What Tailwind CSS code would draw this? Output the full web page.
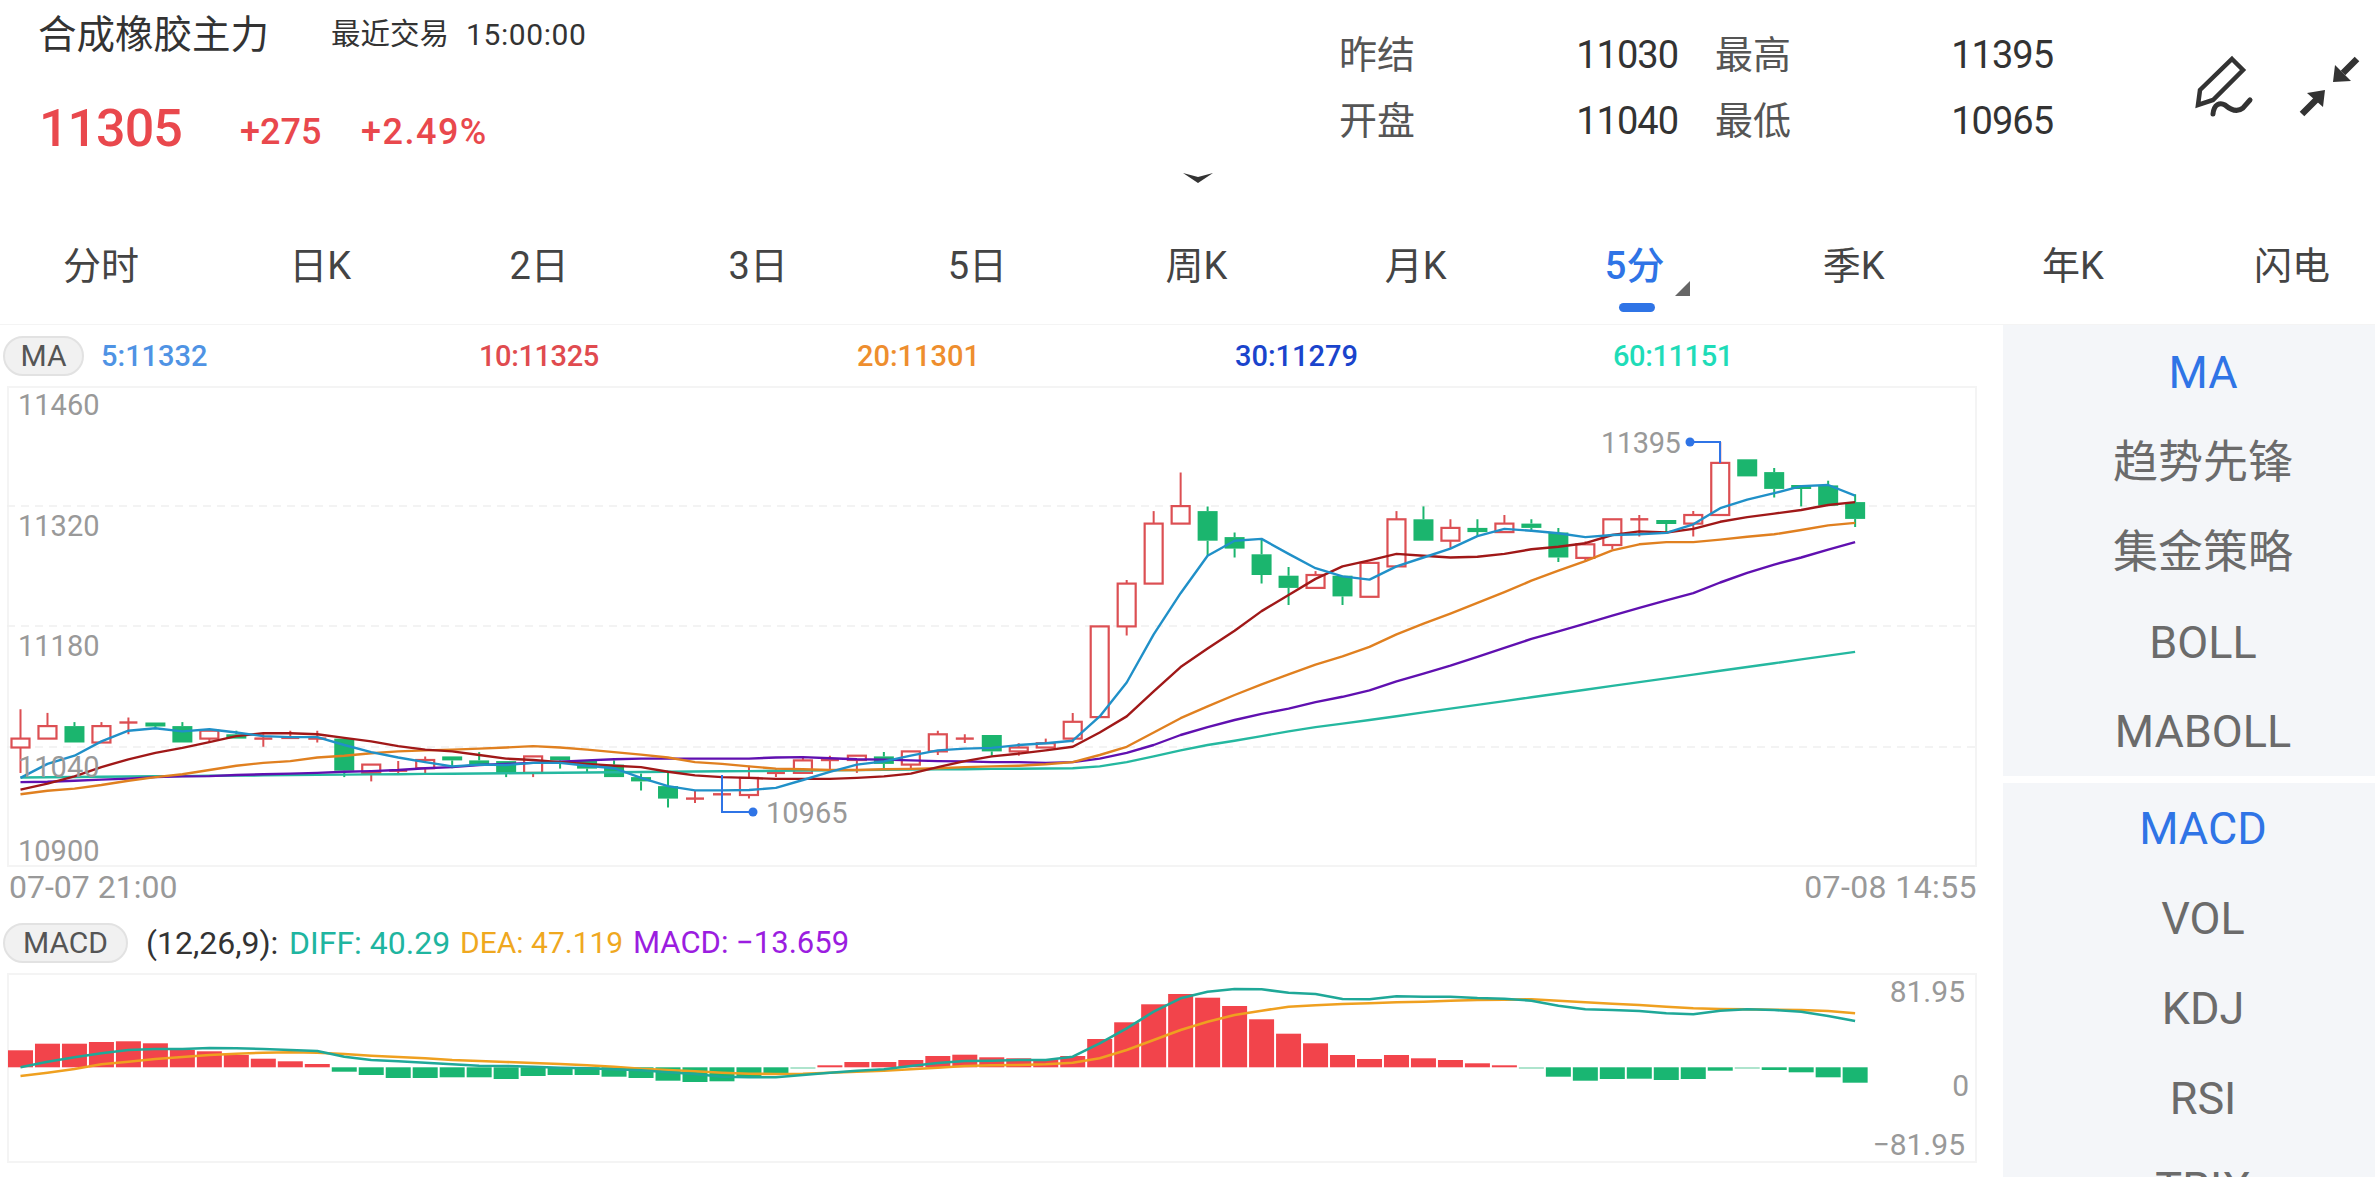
<!DOCTYPE html>
<html lang="zh-CN">
<head>
<meta charset="utf-8">
<title>合成橡胶主力</title>
<script src="https://cdn.jsdelivr.net/npm/@tailwindcss/browser@4"></script>
</head>
<body class="w-[2375px] h-[1177px] overflow-hidden bg-white text-[#333] font-['Roboto','Noto_Sans_CJK_SC',sans-serif]">
<header class="relative h-[220px] flex">
  <div class="w-[1339px] pl-[39px]">
    <div class="flex items-center h-[36px] mt-[17px]">
      <span class="text-[38.5px] leading-none w-[293px] -ml-[1px]">合成橡胶主力</span>
      <span class="text-[29.5px] leading-none w-[135px]">最近交易</span>
      <span class="text-[30px] leading-none tracking-[0.6px]">15:00:00</span>
    </div>
    <div class="flex items-end mt-[55px] text-[#e9484d] font-medium">
      <span class="text-[52px] leading-[42px] w-[201px] tracking-[-1px]">11305</span>
      <span class="text-[36px] leading-[28px] w-[121px] mb-[4px]">+275</span>
      <span class="text-[36px] leading-[28px] mb-[4px] tracking-[1.5px]">+2.49%</span>
    </div>
  </div>
  <div class="w-[715px] pt-[37px] text-[38px] leading-[36px]">
    <div class="flex h-[66px]"><span class="w-[175px] text-[#555]">昨结</span><span class="w-[164px] text-right tracking-[-1px]">11030</span><span class="w-[239px] pl-[37px] text-[#555]">最高</span><span class="w-[136px] text-right tracking-[-1px]">11395</span></div>
    <div class="flex"><span class="w-[175px] text-[#555]">开盘</span><span class="w-[164px] text-right tracking-[-1px]">11040</span><span class="w-[239px] pl-[37px] text-[#555]">最低</span><span class="w-[136px] text-right tracking-[-1px]">10965</span></div>
  </div>
  <svg class="absolute left-[2190px] top-[50px]" width="180" height="75" viewBox="2190 50 180 75" fill="none" stroke="#333">
    <path d="M2232 59 L2243 70 L2213 100 L2198 105 L2200 90 Z" stroke-width="4.5" stroke-linejoin="miter"/>
    <path d="M2213 114 C2214 104 2220 102 2225 105 C2232 111 2238 112 2243 108 L2250 100" stroke-width="5" stroke-linecap="round"/>
    <path d="M2357 59 L2343 73 M2302 114 L2316 100" stroke-width="6.5"/>
    <path d="M2333 82 L2335 65 L2351 81 Z M2325 90 L2307 93 L2323 107 Z" fill="#333" stroke="none"/>
  </svg>
  <svg class="absolute left-[1180px] top-[170px]" width="36" height="16" viewBox="0 0 36 16"><path d="M3 3 L18 7 L33 3 L18 13 Z" fill="#333"/></svg>
</header>
<nav class="relative h-[104px] flex justify-between pl-[63px] pr-[45px] pt-[27px] text-[38px] leading-[38px] text-[#444]">
  <span class="w-[76px] text-center whitespace-nowrap">分时</span>
  <span class="w-[76px] text-center whitespace-nowrap">日K</span>
  <span class="w-[76px] text-center whitespace-nowrap">2日</span>
  <span class="w-[76px] text-center whitespace-nowrap">3日</span>
  <span class="w-[76px] text-center whitespace-nowrap">5日</span>
  <span class="w-[76px] text-center whitespace-nowrap">周K</span>
  <span class="w-[76px] text-center whitespace-nowrap">月K</span>
  <span class="relative w-[76px] text-center whitespace-nowrap font-medium text-[#2f74e6]">5分
    <span class="absolute left-[22px] top-[56px] w-[36px] h-[9px] rounded-full bg-[#2f74e6]"></span>
    <span class="absolute left-[78px] top-[34px] w-0 h-0 border-l-[15px] border-l-transparent border-b-[15px] border-b-[#666]"></span>
  </span>
  <span class="w-[76px] text-center whitespace-nowrap">季K</span>
  <span class="w-[76px] text-center whitespace-nowrap">年K</span>
  <span class="w-[76px] text-center whitespace-nowrap">闪电</span>
</nav>
<main class="flex h-[853px] border-t border-[#f4f4f4] overflow-hidden">
  <section class="w-[2003px] shrink-0">
    <div class="flex items-center h-[61px] pt-[1px] pl-[3px] text-[29px] leading-none font-medium">
      <span class="w-[81px] h-[40px] mr-[17px] rounded-full bg-[#f1f1f1] border-2 border-[#e2e2e2] flex items-center justify-center text-[#555] font-normal text-[30px]">MA</span>
      <span class="w-[378px] text-[#4f93e4]">5:11332</span>
      <span class="w-[378px] text-[#e04b4f] tracking-[-0.4px]">10:11325</span>
      <span class="w-[378px] text-[#ee8e2e]">20:11301</span>
      <span class="w-[378px] text-[#1a44cc]">30:11279</span>
      <span class="text-[#1fdcb8] tracking-[-0.4px]">60:11151</span>
    </div>
    <div class="relative ml-[7px] w-[1970px] h-[481px] border-2 border-[#f4f4f4] text-[29px] leading-none text-[#999]">
      <svg id="kline" class="absolute -left-[2px] -top-[2px]" width="1970" height="481" viewBox="7 386 1970 481"></svg>
      <span class="absolute left-[9px] top-[3px]">11460</span>
      <span class="absolute left-[9px] top-[124px]">11320</span>
      <span class="absolute left-[9px] top-[244px]">11180</span>
      <span class="absolute left-[9px] top-[365px]">11040</span>
      <span class="absolute left-[9px] top-[449px]">10900</span>
      <span class="absolute left-[1592px] top-[41px] tracking-[-0.4px]">11395</span>
      <span class="absolute left-[757px] top-[411px]">10965</span>
    </div>
    <div class="flex justify-between items-center h-[55px] pl-[9px] pr-[26px] pb-[16px] text-[32px] leading-none text-[#999]">
      <span>07-07 21:00</span><span class="tracking-[0.4px]">07-08 14:55</span>
    </div>
    <div class="flex items-center h-[40px] pt-[1px] pl-[3px] text-[30px] leading-none whitespace-nowrap">
      <span class="w-[125px] h-[40px] mr-[18px] rounded-full bg-[#f1f1f1] border-2 border-[#e2e2e2] flex items-center justify-center text-[#555]">MACD</span>
      <span class="w-[143px] text-[#333] text-[32px]">(12,26,9):</span>
      <span class="w-[171px] text-[#1fb5a0] text-[32px]">DIFF: 40.29</span>
      <span class="w-[173px] text-[#efa81f]">DEA: 47.119</span>
      <span class="text-[#9b1de0] text-[31px]">MACD: −13.659</span>
    </div>
    <div class="relative ml-[7px] mt-[11px] w-[1970px] h-[190px] border-2 border-[#f4f4f4] text-[30px] leading-none text-[#999]">
      <svg id="macd" class="absolute -left-[2px] -top-[2px]" width="1970" height="190" viewBox="7 973 1970 190"></svg>
      <span class="absolute right-[10px] top-[2px]">81.95</span>
      <span class="absolute right-[6px] top-[96px]">0</span>
      <span class="absolute right-[10px] top-[155px]">−81.95</span>
    </div>
  </section>
  <aside class="w-[372px] text-[45px] leading-none text-[#6b6b6b] text-center">
    <div class="h-[451px] pt-[3px] pl-[28px] bg-[#f4f6f9] overflow-hidden">
      <div class="h-[89.75px] flex items-center justify-center text-[#2f74e6]">MA</div>
      <div class="h-[89.75px] flex items-center justify-center">趋势先锋</div>
      <div class="h-[89.75px] flex items-center justify-center">集金策略</div>
      <div class="h-[89.75px] flex items-center justify-center">BOLL</div>
      <div class="h-[89.75px] flex items-center justify-center">MABOLL</div>
    </div>
    <div class="h-[400px] mt-[7px] pl-[28px] bg-[#f4f6f9] overflow-hidden">
      <div class="h-[90px] flex items-center justify-center text-[#2f74e6]">MACD</div>
      <div class="h-[90px] flex items-center justify-center">VOL</div>
      <div class="h-[90px] flex items-center justify-center">KDJ</div>
      <div class="h-[90px] flex items-center justify-center">RSI</div>
      <div class="h-[90px] flex items-center justify-center">TRIX</div>
    </div>
  </aside>
</main>
<script>
const X=i=>20.5+i*26.98, Y=z=>+(320+z/2.8).toFixed(1), MY=z=>+(880+z/3).toFixed(1);
// [high, bodyTop, bodyBottom, low, 1=red hollow / 0=green solid], in reference crop units
const C=[[1090,1172,1197,1268,1],[1100,1137,1172,1172,1],[1126,1137,1183,1183,0],[1126,1137,1183,1183,1],[1113,1127,1127,1160,1],[1127,1127,1137,1145,0],[1126,1137,1183,1183,0],[1150,1150,1172,1183,1],[1150,1160,1172,1172,0],[1160,1172,1172,1195,1],[1150,1170,1170,1172,1],[1150,1172,1172,1183,1],[1172,1172,1262,1280,0],[1245,1245,1268,1292,1],[1235,1262,1262,1268,1],[1222,1232,1255,1268,1],[1222,1222,1233,1255,0],[1210,1233,1245,1245,0],[1235,1235,1268,1280,0],[1222,1222,1268,1280,1],[1222,1222,1233,1256,0],[1233,1233,1256,1268,0],[1233,1245,1280,1280,0],[1270,1280,1292,1317,0],[1262,1305,1340,1365,0],[1318,1340,1340,1352,1],[1318,1328,1328,1378,1],[1248,1282,1330,1340,1],[1258,1268,1268,1280,1],[1222,1233,1268,1268,1],[1220,1232,1232,1258,1],[1220,1220,1232,1268,1],[1210,1222,1243,1256,0],[1208,1208,1245,1256,1],[1150,1160,1208,1218,1],[1160,1172,1172,1184,1],[1162,1162,1208,1220,0],[1185,1197,1208,1220,1],[1172,1185,1197,1197,1],[1100,1125,1172,1183,1],[858,858,1112,1112,1],[728,738,858,883,1],[535,570,738,738,1],[427,521,570,570,1],[522,535,618,660,0],[595,608,640,665,0],[616,656,714,738,0],[692,716,750,798,0],[703,714,750,750,1],[716,716,774,798,0],[680,680,775,775,1],[535,558,690,690,1],[522,558,618,618,0],[558,582,618,640,1],[558,582,594,606,0],[546,570,594,594,1],[558,570,582,594,0],[582,595,665,678,0],[620,628,666,678,1],[558,558,630,642,1],[546,558,558,606,1],[560,560,570,594,0],[535,546,570,606,1],[342,400,546,546,1],[390,390,438,438,0],[414,426,473,497,0],[462,462,472,522,0],[450,463,520,520,0],[488,510,557,580,0]];
const RED='#dc4f53',GRN='#1bb56e';let s='';
[506,626,747].forEach(y=>s+=`<path d="M7 ${y}H1977" stroke="#f0f0f0" stroke-width="1.5" stroke-dasharray="8 6"/>`);
C.forEach((c,i)=>{const x=X(i),w=c[4]?18:19,h=Y(c[0]),t=Y(c[1]),b=Y(c[2]),l=Y(c[3]),col=c[4]?RED:GRN;
 s+=`<path d="M${x} ${h}V${t}M${x} ${b}V${l}" stroke="${col}" stroke-width="2"/>`;
 if(b-t<1.5) s+=`<path d="M${x-w/2} ${t}H${x+w/2}" stroke="${col}" stroke-width="2.4"/>`;
 else if(c[4]) s+=`<rect x="${x-w/2}" y="${t}" width="${w}" height="${b-t}" fill="#fff" stroke="${col}" stroke-width="2.2"/>`;
 else s+=`<rect x="${x-w/2-.5}" y="${t}" width="${w+1}" height="${Math.max(b-t,4)}" fill="${col}"/>`;
});
const line=(a,col,W,F)=>`<path d="M${a.map((v,i)=>X(i).toFixed(1)+' '+F(v)).join('L')}" fill="none" stroke="${col}" stroke-width="${W}" stroke-linejoin="round"/>`;
const m60=[];for(let i=0;i<=68;i++){let v;if(i<=39)v=1281-(i/39)*26;else if(i<=50){v=[1250,1238,1222,1205,1190,1178,1165,1152,1140,1130,1120][i-40]}else v=1120-(i-50)*10.6;m60.push(v)}
s+=line(m60,'#25b8a0',2.4,Y);
s+=line([1294,1293,1290,1287,1284,1280,1278,1277,1274,1272,1270,1268,1265,1263,1260,1255,1252,1246,1243,1240,1237,1233,1230,1228,1228,1228,1228,1228,1225,1224,1227,1230,1231,1233,1235,1236,1238,1238,1240,1238,1228,1212,1190,1162,1140,1120,1103,1088,1070,1055,1037,1012,990,968,943,918,893,872,850,828,806,785,765,735,708,685,665,643,622],'#6010b0',2.4,Y);
s+=line([1328,1318,1312,1302,1290,1280,1272,1260,1248,1240,1235,1225,1220,1213,1208,1205,1203,1200,1197,1193,1197,1203,1210,1217,1225,1238,1243,1250,1256,1258,1260,1260,1258,1257,1255,1252,1250,1248,1244,1238,1218,1195,1155,1115,1082,1050,1020,992,965,942,915,880,850,822,792,762,730,702,675,645,628,622,622,615,607,600,588,575,568],'#e08020',2.4,Y);
s+=line([1315,1298,1278,1252,1230,1212,1198,1182,1165,1157,1157,1160,1170,1180,1193,1203,1208,1218,1228,1232,1238,1243,1248,1252,1265,1275,1280,1282,1285,1285,1285,1282,1278,1270,1252,1235,1222,1214,1205,1195,1155,1110,1040,972,920,870,815,770,725,690,673,655,660,665,663,655,642,635,625,602,592,595,585,565,552,542,532,518,510],'#a01818',2.4,Y);
s+=line([1282,1243,1220,1180,1150,1143,1152,1146,1155,1165,1168,1168,1190,1210,1225,1238,1250,1245,1246,1240,1240,1248,1255,1282,1305,1317,1317,1316,1310,1288,1265,1245,1236,1220,1205,1200,1198,1190,1185,1178,1110,1015,880,765,660,618,613,655,695,718,727,690,665,640,605,585,590,597,608,602,600,596,572,527,503,485,465,462,492],'#2090c8',2.4,Y);
s+=`<path d="M1720 463V442H1690M722 775V812H753" fill="none" stroke="#2f74e6" stroke-width="2"/><circle cx="1690" cy="442" r="4.5" fill="#2f74e6"/><circle cx="753" cy="812" r="4.5" fill="#2f74e6"/>`;
document.getElementById('kline').innerHTML=s;
const B=[511,491,491,486,484,490,510,514,525,536,544,552,575,585,594,594,592,592,597,588,585,585,590,594,602,606,604,592,582,566,556,546,546,540,528,524,532,535,538,528,477,427,373,342,353,378,418,461,490,525,537,525,535,540,550,556,566,590,602,597,596,600,597,572,566,570,577,592,608];
let m='';const Z=562;
B.forEach((v,i)=>{const x=X(i),t=MY(Math.min(v,Z)),b=MY(Math.max(v,Z));const up=v<Z;
 m+=`<rect x="${x-12.5}" y="${t}" width="25" height="${Math.max(b-t,1)}" fill="${up?'#f2444b':'#19b672'}" ${Math.abs(v-Z)<6?'opacity=".5"':''}/>`});
m+=line([588,578,567,553,545,537,531,525,521,518,517,518,522,527,531,535,540,543,546,549,552,556,560,566,570,574,578,581,582,581,578,575,572,568,563,558,556,555,553,548,535,510,480,450,425,405,392,380,376,372,370,367,365,362,360,359,358,362,367,371,375,380,385,387,388,389,390,393,400],'#efa020',2.6,MY);
m+=line([562,545,532,520,510,507,507,504,505,507,510,513,530,540,544,548,553,557,558,560,563,565,568,571,577,582,590,592,592,585,578,572,568,558,549,543,542,540,540,530,490,445,395,355,335,327,328,338,342,357,358,349,350,350,354,356,362,377,388,390,393,400,403,392,388,390,395,408,423],'#1fa898',2.6,MY);
document.getElementById('macd').innerHTML=m;
</script>
</body>
</html>
